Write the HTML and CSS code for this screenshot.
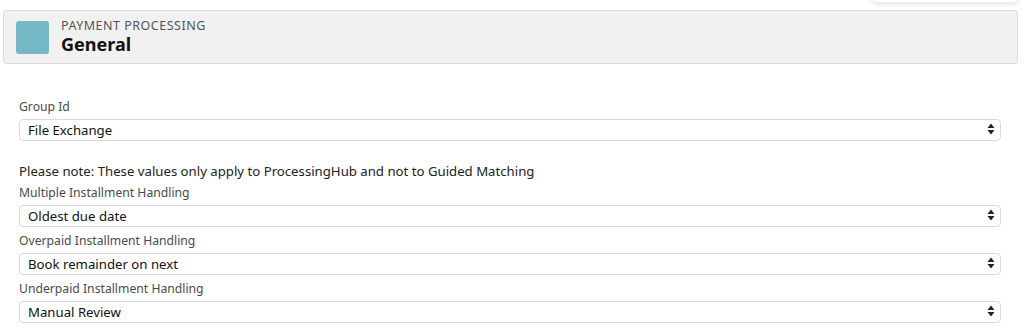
FILE: index.html
```html
<!DOCTYPE html>
<html lang="en">
<head>
    <meta charset="UTF-8">
    <title>Payment Processing - General</title>
    <link rel="stylesheet" href="styles.css">
</head>
<body>
    <div class="popover-edge"></div>

    <div class="page-header">
        <div class="header-icon"></div>
        <div class="header-titles">
            <p class="header-kicker">Payment Processing</p>
            <h1 class="header-title">General</h1>
        </div>
    </div>

    <div class="form">
        <div class="field">
            <label class="field-label">Group Id</label>
            <div class="select-wrap">
                <select class="select"><option>File Exchange</option></select>
                <svg class="select-arrows" width="8" height="12" viewBox="0 0 8 12"><path d="M4 0.5 L7.5 5 L0.5 5 Z M4 11.5 L7.5 7 L0.5 7 Z" fill="#222"/></svg>
            </div>
        </div>

        <p class="note">Please note: These values only apply to ProcessingHub and not to Guided Matching</p>

        <div class="field">
            <label class="field-label">Multiple Installment Handling</label>
            <div class="select-wrap">
                <select class="select"><option>Oldest due date</option></select>
                <svg class="select-arrows" width="8" height="12" viewBox="0 0 8 12"><path d="M4 0.5 L7.5 5 L0.5 5 Z M4 11.5 L7.5 7 L0.5 7 Z" fill="#222"/></svg>
            </div>
        </div>

        <div class="field">
            <label class="field-label">Overpaid Installment Handling</label>
            <div class="select-wrap">
                <select class="select"><option>Book remainder on next</option></select>
                <svg class="select-arrows" width="8" height="12" viewBox="0 0 8 12"><path d="M4 0.5 L7.5 5 L0.5 5 Z M4 11.5 L7.5 7 L0.5 7 Z" fill="#222"/></svg>
            </div>
        </div>

        <div class="field">
            <label class="field-label">Underpaid Installment Handling</label>
            <div class="select-wrap">
                <select class="select"><option>Manual Review</option></select>
                <svg class="select-arrows" width="8" height="12" viewBox="0 0 8 12"><path d="M4 0.5 L7.5 5 L0.5 5 Z M4 11.5 L7.5 7 L0.5 7 Z" fill="#222"/></svg>
            </div>
        </div>
    </div>
</body>
</html>
```

FILE: styles.css
```css
* {
    margin: 0;
    padding: 0;
    box-sizing: border-box;
}

body {
    font-family: 'Noto Sans', 'Open Sans', sans-serif;
    background: white;
    color: #222;
    width: 1024px;
    height: 334px;
    overflow: hidden;
    position: relative;
}

/* bottom edge of a menu that hangs over the page */
.popover-edge {
    position: absolute;
    top: -30px;
    left: 872px;
    width: 146px;
    height: 32px;
    background: white;
    border-radius: 0 0 4px 4px;
    box-shadow: 0 2px 6px rgba(0,0,0,0.12);
}

.page-header {
    margin: 10px 6px 0 3px;
    height: 54px;
    background: #f1f1f1;
    border: 1px solid #dcdcdc;
    border-radius: 3px;
    display: flex;
    align-items: center;
    padding-left: 12px;
    gap: 12px;
}

.header-icon {
    width: 33px;
    height: 33px;
    background: #75b9c7;
    border-radius: 3px;
}

.header-titles {
    display: flex;
    flex-direction: column;
}

.header-kicker {
    font-size: 12.5px;
    line-height: 14px;
    text-transform: uppercase;
    letter-spacing: 0.5px;
    color: #555;
}

.header-title {
    font-size: 18px;
    line-height: 22px;
    font-weight: 700;
    color: #111;
}

.form {
    padding: 34px 23px 0 19px;
}

.field {
    margin-bottom: 5px;
}

.field-label {
    display: block;
    font-size: 12.2px;
    line-height: 18px;
    color: #4a4a4a;
    margin-bottom: 2px;
}

.select-wrap {
    position: relative;
}

.select {
    appearance: none;
    -webkit-appearance: none;
    width: 100%;
    height: 22px;
    border: 1px solid #dadada;
    border-radius: 4px;
    background: white;
    font-family: inherit;
    font-size: 13.2px;
    color: #111;
    padding: 0 8px;
}

.select-arrows {
    position: absolute;
    right: 6px;
    top: 5px;
}

.note {
    font-size: 13.2px;
    line-height: 18px;
    color: #222;
    margin: 21px 0 4px;
}
```
